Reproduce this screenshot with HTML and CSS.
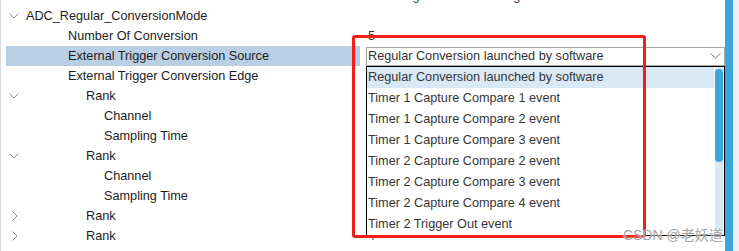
FILE: index.html
```html
<!DOCTYPE html>
<html lang="en">
<head>
    <meta charset="UTF-8">
    <title>ADC Parameter Settings</title>
    <link rel="stylesheet" href="styles.css">
</head>
<body>
    <div class="frame">
        <div class="tree">
            <div class="row">
                <div class="name lvl2">End of Conversion Selection</div>
                <div class="value">EOC flag at the end of single channel conversion</div>
            </div>
            <div class="row">
                <div class="name lvl1">
                    <svg class="toggle" width="10" height="6" viewBox="0 0 10 6"><path d="M0.5 0.5 L5 5 L9.5 0.5" fill="none" stroke="#8c8c8c" stroke-width="1"/></svg>
                    ADC_Regular_ConversionMode
                </div>
                <div class="value"></div>
            </div>
            <div class="row">
                <div class="name lvl2">Number Of Conversion</div>
                <div class="value">5</div>
            </div>
            <div class="row selected">
                <div class="name lvl2">External Trigger Conversion Source</div>
                <div class="value">
                    <div class="combo">
                        <span>Regular Conversion launched by software</span>
                        <svg width="11" height="6" viewBox="0 0 11 6"><path d="M0.5 0.5 L5.5 5 L10.5 0.5" fill="none" stroke="#7a7a7a" stroke-width="1"/></svg>
                    </div>
                </div>
            </div>
            <div class="row">
                <div class="name lvl2">External Trigger Conversion Edge</div>
                <div class="value"></div>
            </div>
            <div class="row">
                <div class="name lvl3">
                    <svg class="toggle" width="10" height="6" viewBox="0 0 10 6"><path d="M0.5 0.5 L5 5 L9.5 0.5" fill="none" stroke="#8c8c8c" stroke-width="1"/></svg>
                    Rank
                </div>
                <div class="value"></div>
            </div>
            <div class="row">
                <div class="name lvl4">Channel</div>
                <div class="value"></div>
            </div>
            <div class="row">
                <div class="name lvl4">Sampling Time</div>
                <div class="value"></div>
            </div>
            <div class="row">
                <div class="name lvl3">
                    <svg class="toggle" width="10" height="6" viewBox="0 0 10 6"><path d="M0.5 0.5 L5 5 L9.5 0.5" fill="none" stroke="#8c8c8c" stroke-width="1"/></svg>
                    Rank
                </div>
                <div class="value"></div>
            </div>
            <div class="row">
                <div class="name lvl4">Channel</div>
                <div class="value"></div>
            </div>
            <div class="row">
                <div class="name lvl4">Sampling Time</div>
                <div class="value"></div>
            </div>
            <div class="row">
                <div class="name lvl3">
                    <svg class="toggle closed" width="6" height="10" viewBox="0 0 6 10"><path d="M0.5 0.5 L5 5 L0.5 9.5" fill="none" stroke="#8c8c8c" stroke-width="1"/></svg>
                    Rank
                </div>
                <div class="value"></div>
            </div>
            <div class="row">
                <div class="name lvl3">
                    <svg class="toggle closed" width="6" height="10" viewBox="0 0 6 10"><path d="M0.5 0.5 L5 5 L0.5 9.5" fill="none" stroke="#8c8c8c" stroke-width="1"/></svg>
                    Rank
                </div>
                <div class="value">4</div>
            </div>
        </div>
        <div class="side-bar"></div>
        <div class="edge"></div>
    </div>

    <ul class="dropdown">
        <li class="current">Regular Conversion launched by software</li>
        <li>Timer 1 Capture Compare 1 event</li>
        <li>Timer 1 Capture Compare 2 event</li>
        <li>Timer 1 Capture Compare 3 event</li>
        <li>Timer 2 Capture Compare 2 event</li>
        <li>Timer 2 Capture Compare 3 event</li>
        <li>Timer 2 Capture Compare 4 event</li>
        <li>Timer 2 Trigger Out event</li>
        <div class="scroll-track"><div class="scroll-thumb"></div></div>
    </ul>

    <div class="mark"></div>
    <div class="watermark">CSDN @老妖道</div>
</body>
</html>
```

FILE: styles.css
```css
body {
    margin: 0;
    width: 739px;
    height: 251px;
    overflow: hidden;
    background: #ffffff;
    font-family: "Liberation Sans", Arial, sans-serif;
    font-size: 12.7px;
    color: #1c1c1c;
}
.frame {
    display: flex;
    height: 251px;
}
.tree {
    width: 724px;
    border-left: 1px solid #d3d9e1;
    margin-top: -14px;
}
.row {
    display: flex;
    height: 20px;
    align-items: center;
}
.name {
    position: relative;
    box-sizing: border-box;
    flex: none;
    width: 354px;
    height: 20px;
    margin-left: 5px;
    display: flex;
    align-items: center;
    white-space: nowrap;
}
.selected .name {
    background: #b9cfe6;
}
.lvl1 { padding-left: 20px; }
.lvl2 { padding-left: 62px; }
.lvl3 { padding-left: 80px; }
.lvl4 { padding-left: 98px; }
.toggle {
    position: absolute;
    left: 3px;
    top: 7px;
}
.toggle.closed {
    left: 6px;
    top: 5px;
}
.value {
    flex: 1;
    padding-left: 8px;
    color: #3a3a3a;
    white-space: nowrap;
}
.selected .value {
    padding-left: 6px;
}
.combo {
    width: 353px;
    height: 17px;
    border: 1px solid #a6a6a6;
    display: flex;
    align-items: center;
    justify-content: space-between;
    padding-left: 1px;
    padding-right: 3px;
    background: #ffffff;
    color: #333333;
}
.side-bar {
    width: 8px;
    background: #3aa6dc;
}
.edge {
    flex: 1;
    background: #efeff1;
}
.dropdown {
    position: absolute;
    left: 366px;
    top: 66px;
    width: 357px;
    height: 168px;
    margin: 0;
    padding: 0;
    list-style: none;
    border: 1px solid #000000;
    background: #ffffff;
    color: #363636;
}
.dropdown li {
    height: 21px;
    line-height: 21px;
    padding-left: 1px;
    white-space: nowrap;
}
.dropdown li.current {
    background: #d9e8f6;
    margin-right: 10px;
}
.scroll-track {
    position: absolute;
    right: 1px;
    top: 0;
    width: 8px;
    height: 168px;
    background: #d9e8f6;
}
.scroll-thumb {
    margin-top: 2px;
    height: 93px;
    border-radius: 4px;
    background: #3aa6dc;
}
.mark {
    position: absolute;
    left: 352px;
    top: 35px;
    width: 288px;
    height: 197px;
    border: 3px solid #f21d17;
    border-radius: 3px;
}
.watermark {
    position: absolute;
    left: 623px;
    top: 224px;
    font-family: "Liberation Sans", "Noto Sans CJK SC", sans-serif;
    font-size: 14px;
    color: #a3a3a3;
    text-shadow: 0 0 2px #ffffff;
}
```
